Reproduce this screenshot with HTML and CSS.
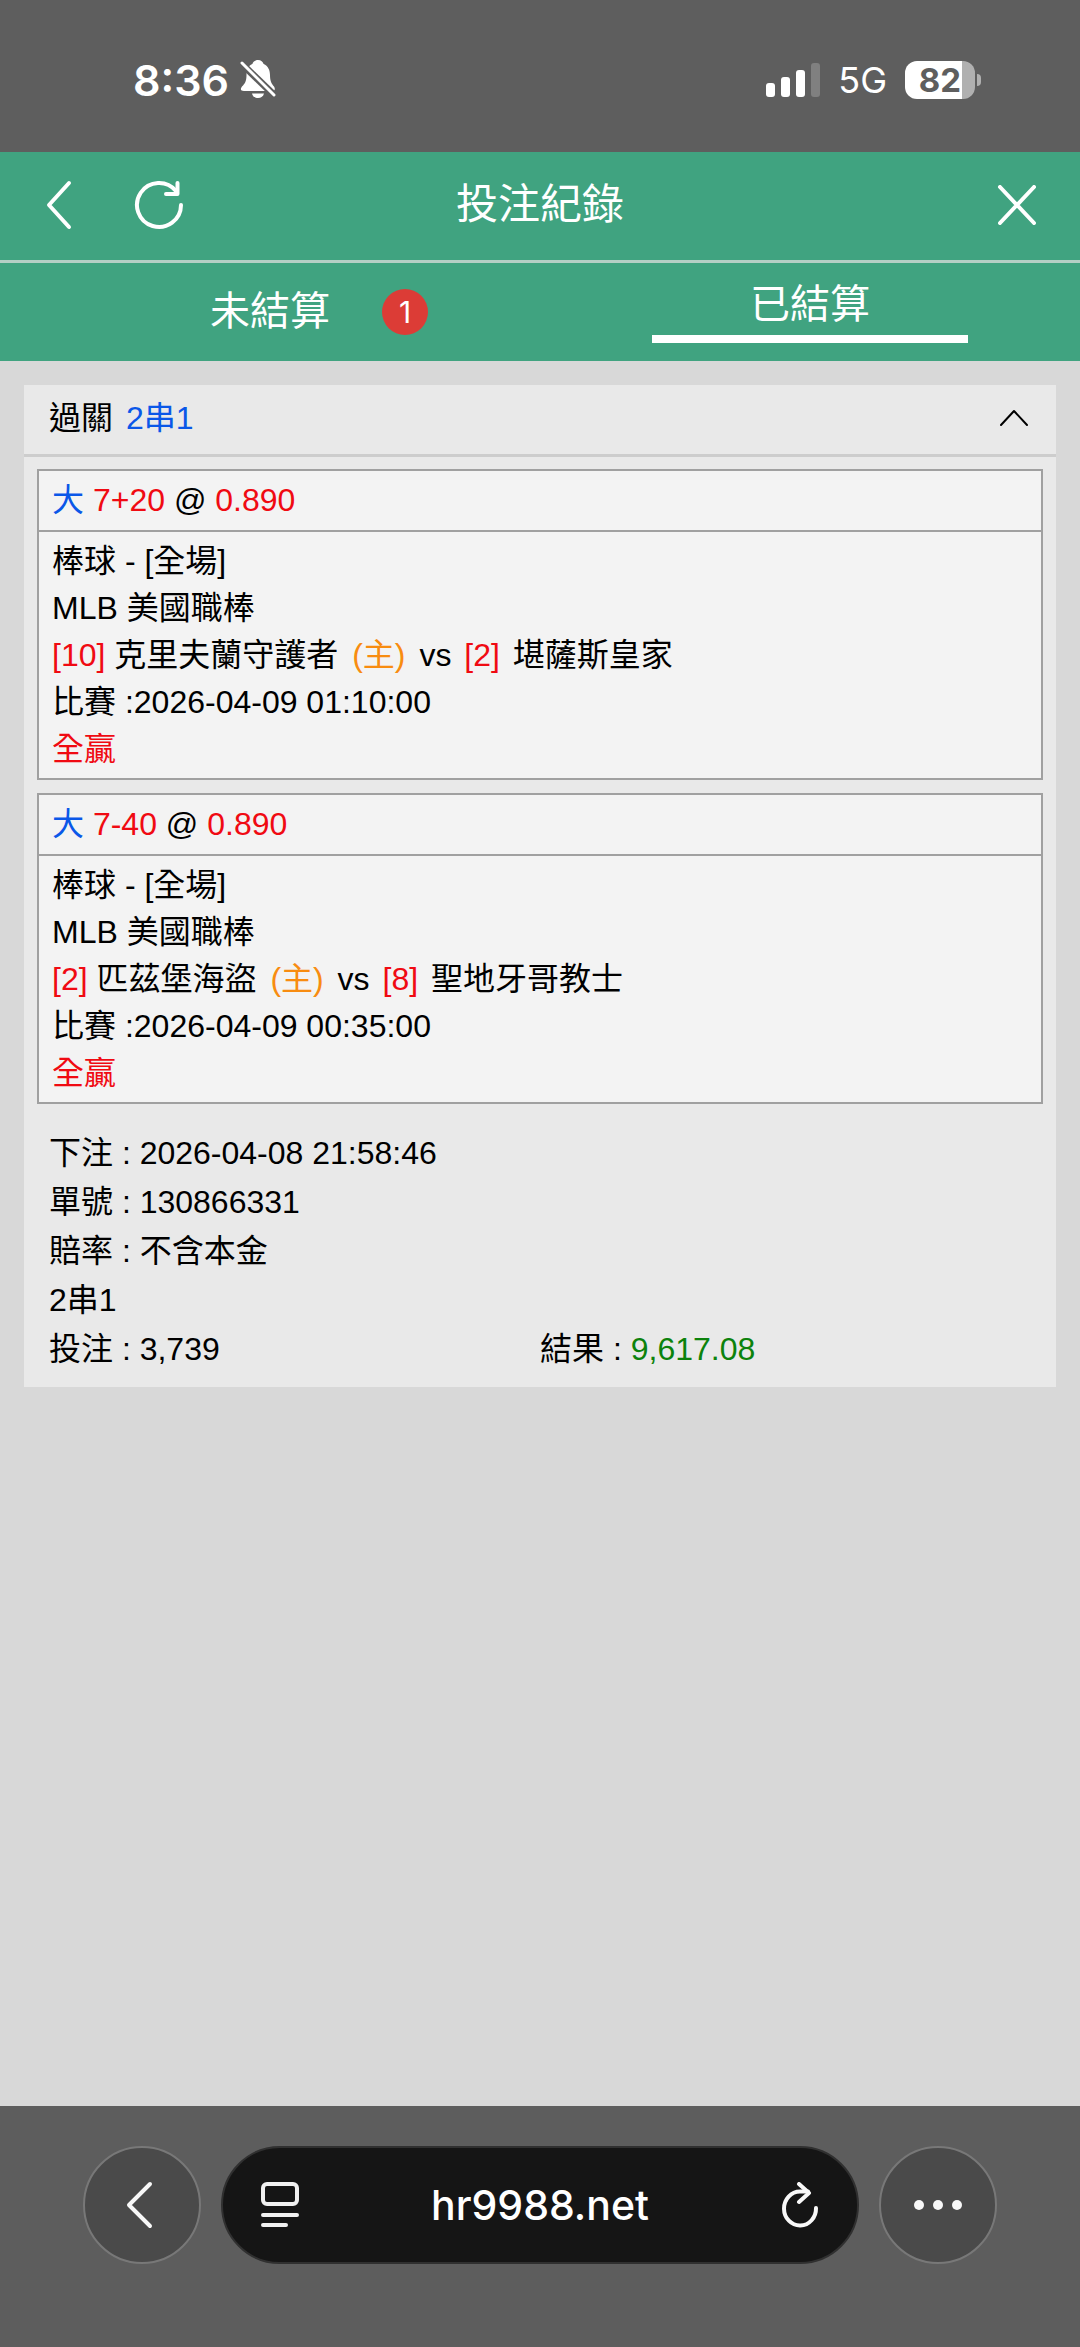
FILE: index.html
```html
<!DOCTYPE html>
<html lang="zh-Hant">
<head>
<meta charset="utf-8">
<meta name="viewport" content="width=device-width, initial-scale=1">
<title>投注紀錄</title>
<link rel="stylesheet" href="styles.css">
</head>
<body>
<div class="status-bar">
  <div class="status-group">
    <span class="clock">8:36</span>
    <svg class="icon" width="36" height="40" viewBox="0 0 36 40" fill="#fff" aria-hidden="true">
      <path d="M18 0c-3 0-5 2-5.600 4C8 6 6.500 10 6.500 15c0 6-1.500 8.500-4.500 11.500C0 29 .500 31 4 31h28c3 0 3.500-2 2-4.500-2.500-3-4-5.500-4-11.500 0-5-2-9-6.400-11C23 2 21 0 18 0z"/>
      <path d="M12 33.500h12c-.500 2.700-3 4.500-6 4.500s-5.500-1.800-6-4.500z"/>
      <path d="M1 3L35 36" stroke="#5e5e5e" stroke-width="7"/>
      <path d="M2 3L34 35" stroke="#fff" stroke-width="3" stroke-linecap="round"/>
    </svg>
  </div>
  <div class="status-group status-right">
    <svg class="icon" width="54" height="36" viewBox="0 0 54 36" fill="#fff" aria-hidden="true">
      <rect x="0" y="21" width="9" height="14" rx="3"/>
      <rect x="15" y="15" width="9" height="20" rx="3"/>
      <rect x="30" y="8" width="9" height="27" rx="3"/>
      <rect x="45" y="1" width="9" height="34" rx="3" fill="#808080"/>
    </svg>
    <span class="network">5G</span>
    <div class="battery"><span class="battery-body">82</span><span class="battery-tip"></span></div>
  </div>
</div>

<header class="app-header">
  <div class="header-actions">
    <button class="icon-button" type="button" aria-label="返回">
      <svg width="28" height="50" viewBox="0 0 28 50" fill="none" stroke="#fff" stroke-width="4" stroke-linecap="round" stroke-linejoin="round"><path d="M25 3L5 25l20 22"/></svg>
    </button>
    <button class="icon-button" type="button" aria-label="重新整理">
      <svg width="50" height="50" viewBox="0 0 50 50" fill="none" stroke="#fff" stroke-width="4" stroke-linecap="round" stroke-linejoin="round"><path d="M47 25A22 22 0 1 1 42 11"/><path d="M43.500 3v11H32"/></svg>
    </button>
  </div>
  <h1 class="app-title">投注紀錄</h1>
  <button class="icon-button close" type="button" aria-label="關閉">
    <svg width="40" height="40" viewBox="0 0 40 40" fill="none" stroke="#fff" stroke-width="4" stroke-linecap="round"><path d="M4 2l34 36M38 2L4 38"/></svg>
  </button>
</header>

<nav class="tabs">
  <button class="tab" type="button"><span class="tab-label">未結算<span class="badge">1</span></span></button>
  <button class="tab tab-active" type="button"><span class="tab-label">已結算</span></button>
</nav>

<main class="content">
  <section class="card">
    <div class="card-head">
      <h2 class="card-title">過關 <span class="blue combo">2串1</span></h2>
      <button class="icon-button" type="button" aria-label="收合">
        <svg width="28" height="18" viewBox="0 0 28 18" fill="none" stroke="#000" stroke-width="2" stroke-linecap="round" stroke-linejoin="round"><path d="M1 16L14 2l13 14"/></svg>
      </button>
    </div>
    <div class="bets">
      <article class="bet">
        <p class="bet-head"><span class="blue">大</span> <span class="red">7+20</span> @ <span class="red">0.890</span></p>
        <div class="bet-body">
          <p>棒球 - [全場]</p>
          <p>MLB 美國職棒</p>
          <p><span class="red">[10]</span> 克里夫蘭守護者 <span class="home">(主)</span> vs <span class="red rank">[2]</span> 堪薩斯皇家</p>
          <p>比賽 :2026-04-09 01:10:00</p>
          <p class="red">全贏</p>
        </div>
      </article>
      <article class="bet">
        <p class="bet-head"><span class="blue">大</span> <span class="red">7-40</span> @ <span class="red">0.890</span></p>
        <div class="bet-body">
          <p>棒球 - [全場]</p>
          <p>MLB 美國職棒</p>
          <p><span class="red">[2]</span> 匹茲堡海盜 <span class="home">(主)</span> vs <span class="red rank">[8]</span> 聖地牙哥教士</p>
          <p>比賽 :2026-04-09 00:35:00</p>
          <p class="red">全贏</p>
        </div>
      </article>
    </div>
    <div class="summary">
      <p>下注 : 2026-04-08 21:58:46</p>
      <p>單號 : 130866331</p>
      <p>賠率 : 不含本金</p>
      <p>2串1</p>
      <div class="totals">
        <p>投注 : 3,739</p>
        <p>結果 : <span class="green">9,617.08</span></p>
      </div>
    </div>
  </section>
</main>

<footer class="browser-bar">
  <button class="round-button" type="button" aria-label="上一頁">
    <svg width="32" height="48" viewBox="0 0 32 48" fill="none" stroke="#f8f8f8" stroke-width="4" stroke-linecap="round" stroke-linejoin="round"><path d="M24 3L3 24l21 21"/></svg>
  </button>
  <div class="address-bar">
    <button class="icon-button" type="button" aria-label="頁面選單">
      <svg width="38" height="46" viewBox="0 0 38 46" fill="none" stroke="#f0f0f0" stroke-width="4" stroke-linecap="round"><rect x="2" y="2" width="34" height="20" rx="4"/><path d="M2 33h34M2 43h23"/></svg>
    </button>
    <a class="address" href="#">hr9988.net</a>
    <button class="icon-button" type="button" aria-label="重新載入">
      <svg width="38" height="46" viewBox="0 0 38 46" fill="none" stroke="#f8f8f8" stroke-width="4" stroke-linecap="round" stroke-linejoin="round"><path d="M35 26A16 17 0 1 1 19 9.500h8"/><path d="M18 2l10 9-10 9"/></svg>
    </button>
  </div>
  <button class="round-button" type="button" aria-label="更多">
    <svg width="48" height="10" viewBox="0 0 48 10" fill="#f8f8f8"><circle cx="5" cy="5" r="5"/><circle cx="24" cy="5" r="5"/><circle cx="43" cy="5" r="5"/></svg>
  </button>
</footer>
</body>
</html>
```
FILE: styles.css
```css
* {
  box-sizing: border-box;
}

body {
  display: flex;
  flex-direction: column;
  min-height: 100vh;
  margin: 0;
  background: #d8d8d8;
  color: #000;
  font: 32px/48px "Liberation Sans", "Noto Sans CJK TC", sans-serif;
}

h1,
h2,
p {
  margin: 0;
  font-size: inherit;
  font-weight: 400;
}

button {
  padding: 0;
  border: 0;
  background: none;
  color: inherit;
  font: inherit;
}

svg {
  display: block;
}

.blue { color: #0a57e8; }
.red { color: #f00a12; }
.green { color: #0c820c; }

.icon-button {
  display: flex;
  align-items: center;
  justify-content: center;
}

/* Phone status bar */
.status-bar {
  display: flex;
  align-items: flex-start;
  justify-content: space-between;
  padding: 56px 99px 48px 133px;
  background: #5e5e5e;
  color: #fff;
  font-family: Inter, sans-serif;
}

.status-group {
  display: flex;
  align-items: center;
  gap: 11px;
  height: 48px;
}

.status-right {
  gap: 18px;
}

.clock {
  font-size: 43px;
  font-weight: 600;
}

.network {
  font-size: 36px;
}

.battery {
  display: flex;
  align-items: center;
  gap: 2px;
}

.battery-body {
  width: 70px;
  height: 38px;
  border-radius: 12px;
  background: linear-gradient(to right, #fff 82%, #b0b0b0 82%);
  color: #5e5e5e;
  font-size: 33px;
  font-weight: 700;
  line-height: 38px;
  text-align: center;
}

.battery-tip {
  width: 4px;
  height: 12px;
  border-radius: 0 4px 4px 0;
  background: #b0b0b0;
}

/* Page header and tabs */
.app-header {
  display: grid;
  grid-template-columns: 1fr auto 1fr;
  align-items: center;
  height: 111px;
  padding: 0 44px 2px;
  border-bottom: 3px solid #b4cfc5;
  background: #40a380;
  color: #fff;
}

.header-actions {
  display: flex;
  gap: 62px;
}

.app-title {
  font-size: 42px;
}

.close {
  justify-self: end;
}

.tabs {
  display: grid;
  grid-template-columns: 1fr 1fr;
  height: 98px;
  padding-bottom: 2px;
  background: #40a380;
  color: #fff;
  font-size: 40px;
}

.tab {
  display: flex;
  flex-direction: column;
  align-items: center;
  justify-content: center;
}

.tab-label {
  position: relative;
}

.tab-active::after {
  width: 316px;
  height: 8px;
  margin-top: 7px;
  background: #fff;
  content: "";
}

.badge {
  position: absolute;
  top: 2px;
  left: 172px;
  width: 46px;
  height: 46px;
  border-radius: 50%;
  background: #dc3c36;
  font: 30px/46px Inter, sans-serif;
  text-align: center;
}

/* Bet slip */
.content {
  flex: 1;
  padding: 24px;
}

.card {
  background: #e9e9e9;
}

.card-head {
  display: flex;
  align-items: center;
  justify-content: space-between;
  height: 72px;
  padding: 0 28px 3px 25px;
  border-bottom: 3px solid #cdcdcd;
}

.combo {
  margin-left: 4px;
}

.bets {
  display: grid;
  gap: 13px;
  padding: 12px 13px 0;
}

.bet {
  border: 2px solid #a0a0a0;
  background: #f3f3f3;
}

.bet-head {
  padding: 5px 13px 6px;
  border-bottom: 2px solid #a0a0a0;
}

.bet-body {
  padding: 6px 13px 5px;
  line-height: 47px;
}

.home {
  margin: 0 5px;
  color: #f88c10;
}

.rank {
  margin: 0 4px;
}

.summary {
  padding: 25px 25px 13px;
  line-height: 49px;
}

.totals {
  display: grid;
  grid-template-columns: 1fr 1fr;
}

/* Browser toolbar */
.browser-bar {
  display: flex;
  gap: 20px;
  height: 241px;
  padding: 40px 83px 0;
  background: #5d5d5d;
}

.round-button {
  display: flex;
  align-items: center;
  justify-content: center;
  width: 118px;
  height: 118px;
  border: 2px solid #787878;
  border-radius: 50%;
  background: #4a4a4a;
}

.address-bar {
  display: flex;
  flex: 1;
  align-items: center;
  justify-content: space-between;
  height: 118px;
  padding: 0 38px;
  border: 2px solid #303030;
  border-radius: 59px;
  background: #151515;
}

.address {
  color: #fff;
  font: 500 41px/48px Inter, sans-serif;
  text-decoration: none;
}
```
